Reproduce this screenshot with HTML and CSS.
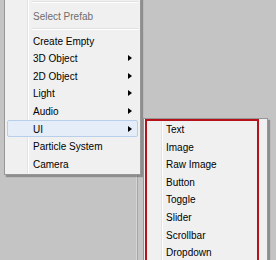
FILE: index.html
```html
<!DOCTYPE html>
<html lang="en">
<head>
  <meta charset="UTF-8" />
  <title>GameObject menu</title>
  <link rel="stylesheet" href="styles.css">
</head>
<body>
  <div class="workspace">
    <div class="panel"></div>

    <!-- Main context menu -->
    <ul class="menu main-menu">
      <li class="sep"></li>
      <li class="item disabled">Select Prefab</li>
      <li class="sep"></li>
      <li class="item">Create Empty</li>
      <li class="item has-sub">3D Object</li>
      <li class="item has-sub">2D Object</li>
      <li class="item has-sub">Light</li>
      <li class="item has-sub">Audio</li>
      <li class="item has-sub active">UI</li>
      <li class="item">Particle System</li>
      <li class="item">Camera</li>
    </ul>

    <!-- UI submenu -->
    <ul class="menu sub-menu">
      <li class="mark"></li>
      <li class="item">Text</li>
      <li class="item">Image</li>
      <li class="item">Raw Image</li>
      <li class="item">Button</li>
      <li class="item">Toggle</li>
      <li class="item">Slider</li>
      <li class="item">Scrollbar</li>
      <li class="item">Dropdown</li>
    </ul>
  </div>
</body>
</html>
```

FILE: styles.css
```css
* {
  box-sizing: border-box;
}

body {
  margin: 0;
  background: #c4c4c4;
  font-family: "Liberation Sans", Arial, sans-serif;
  font-size: 10px;
  color: #000;
  overflow: hidden;
}

.workspace {
  position: relative;
  width: 276px;
  height: 260px;
  overflow: hidden;
}

.panel {
  width: 137px;
  height: 100%;
  border-right: 1px solid #d4d4d4;
  box-shadow: 1px 0 0 #a8a8a8;
}

.menu {
  position: absolute;
  margin: 0;
  padding: 2px;
  list-style: none;
  background: #f0f0f0;
  border: 1px solid #979797;
  box-shadow: 2px 2px 1px rgba(0, 0, 0, 0.28);
}

.main-menu {
  left: 4px;
  top: -6px;
  width: 137px;
  background-image: linear-gradient(to right, transparent 22px, #e2e3e3 22px, #e2e3e3 23px, #fff 23px, #fff 24px, transparent 24px);
}

.sub-menu {
  left: 143px;
  top: 118px;
  width: 125px;
  height: 150px;
  padding-top: 1px;
  overflow: hidden;
  background-image: linear-gradient(to right, transparent 17px, #e2e3e3 17px, #e2e3e3 18px, #fff 18px, #fff 19px, transparent 19px);
}

.item {
  position: relative;
  height: 17.6px;
  line-height: 17.6px;
  padding-left: 25px;
  white-space: nowrap;
  border: 1px solid transparent;
  border-radius: 2px;
}

.sub-menu .item {
  padding-left: 19px;
}

.item.disabled {
  color: #6d6d6d;
}

.item.active {
  background: #e4edf8;
  border-color: #b8cfeb;
}

.has-sub::after {
  content: "";
  position: absolute;
  right: 5px;
  top: 5px;
  border-left: 4px solid #000;
  border-top: 3.5px solid transparent;
  border-bottom: 3.5px solid transparent;
}

.sep {
  height: 2px;
  margin: 4px 0 4px 25px;
  border-top: 1px solid #e0e0e0;
  border-bottom: 1px solid #fff;
}

.main-menu .item:nth-child(2) + .sep {
  margin: 3px 0 2px 25px;
}

.mark {
  position: absolute;
  left: 1px;
  top: 0;
  width: 114px;
  height: 200px;
  border: 2px solid #b5121b;
  pointer-events: none;
}
```
